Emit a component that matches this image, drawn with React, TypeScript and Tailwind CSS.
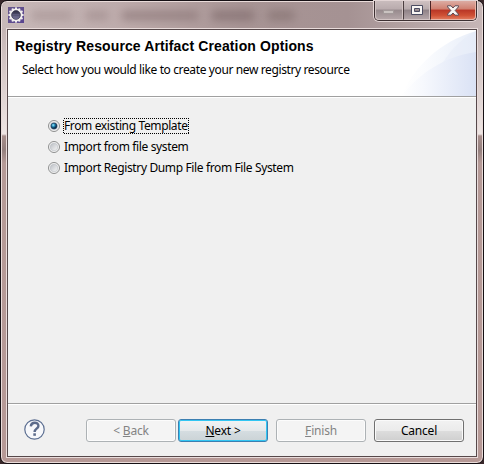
import type { ReactNode } from "react";

const uiFont = "font-['Noto_Sans','Open_Sans',sans-serif] text-[12px] leading-[16px]";

function GearIcon() {
  const teeth = Array.from({ length: 12 }, (_, i) => i * 30);
  return (
    <svg width="16" height="16" viewBox="0 0 16 16">
      <defs>
        <linearGradient id="gear-bg" x1="0" y1="0" x2="1" y2="1">
          <stop offset="0" stopColor="#67578c" />
          <stop offset="1" stopColor="#5a4590" />
        </linearGradient>
        <linearGradient id="gear-core" x1="0" y1="0" x2="0" y2="1">
          <stop offset="0" stopColor="#2b2940" />
          <stop offset="1" stopColor="#7b789e" />
        </linearGradient>
      </defs>
      <rect width="16" height="16" fill="url(#gear-bg)" />
      <g fill="#f1eeee">
        {teeth.map((a) => (
          <rect key={a} x="7" y="0.4" width="2" height="3" transform={`rotate(${a} 8 8)`} />
        ))}
        <circle cx="8" cy="8" r="6.5" />
      </g>
      <circle cx="8" cy="8" r="4.4" fill="url(#gear-core)" stroke="#34304a" strokeWidth="0.7" />
      <path d="M4.5 7.5h7M4.7 9.5h6.6" stroke="#6d698f" strokeWidth="0.5" />
    </svg>
  );
}

function Caption() {
  return (
    <div className="flex h-[20px] w-[103px] rounded-b-[5px] border border-t-0 border-[#3d3032] shadow-[0_0_0_1px_#e3d5d5]">
      <div className="flex w-[28px] items-center justify-center rounded-bl-[4px] border border-t-0 border-[#d2c4c4] bg-[linear-gradient(#c9bcbd_0%,#b9abad_45%,#978a8d_50%,#b3a5a7_100%)] pt-[3px]">
        <svg width="14" height="6" viewBox="0 0 14 6">
          <rect x="1.5" y="1.5" width="10" height="3" fill="#cac3c1" stroke="#a29999" />
        </svg>
      </div>
      <div className="flex w-[27px] items-center justify-center border border-t-0 border-l-[#4b3e40] border-r-[#d2c4c4] border-b-[#d2c4c4] bg-[linear-gradient(#cfc1c2_0%,#b8abad_45%,#8f8287_50%,#b3a5a8_100%)]">
        <svg width="12" height="10" viewBox="0 0 12 10">
          <path fillRule="evenodd" d="M.5.5h11v9H.5zM3.5 3.5v3h5v-3z" fill="#f8f5f3" stroke="#4b4c62" />
        </svg>
      </div>
      <div className="flex flex-1 items-center justify-center rounded-br-[4px] border border-t-0 border-l-[#4b2425] border-r-[#e8b5a8] border-b-[#e8b5a8] bg-[linear-gradient(#dcaca3_0%,#cf7f70_45%,#b93626_50%,#cf5135_80%,#e0775a_100%)]">
        <svg width="12" height="11" viewBox="0 0 12 11">
          <path d="M.5.8H4L6 3 8 .8h3.5v1L8.2 5.5l3.3 3.7v1H8L6 8l-2 2.2H.5v-1l3.3-3.7L.5 1.8z" fill="#f8f4f1" stroke="#5a4955" />
        </svg>
      </div>
    </div>
  );
}

function Radio({ checked, focused, children }: { checked?: boolean; focused?: boolean; children: ReactNode }) {
  return (
    <label className="flex h-[21px] items-center">
      <svg width="12" height="12" viewBox="0 0 12 12" className="-mt-px shrink-0">
        <defs>
          <linearGradient id="radio-face" x1="0" y1="0" x2="1" y2="1">
            <stop offset="0" stopColor="#b9bdc3" />
            <stop offset="1" stopColor="#f8f8f8" />
          </linearGradient>
          <radialGradient id="radio-dot" cx=".38" cy=".35">
            <stop offset="0" stopColor="#a9e6f8" />
            <stop offset=".45" stopColor="#2d9ac5" />
            <stop offset="1" stopColor="#0b304f" />
          </radialGradient>
        </defs>
        <circle cx="6" cy="6" r="5.5" fill="#f5f5f5" stroke="#8e8f8f" />
        <circle cx="6" cy="6" r="3.8" fill="url(#radio-face)" stroke="#b8bdc2" strokeWidth=".6" />
        {checked && <circle cx="6" cy="6" r="3" fill="url(#radio-dot)" stroke="#17395b" strokeWidth=".6" />}
      </svg>
      <span className="relative mb-px ml-[4px] tracking-[-0.37px] whitespace-nowrap text-black">
        {children}
        {focused && (
          <svg width="126" height="16" className="absolute -left-px top-0">
            <rect x=".5" y=".5" width="125" height="15" fill="none" stroke="#000" strokeDasharray="1 1" shapeRendering="crispEdges" />
          </svg>
        )}
      </span>
    </label>
  );
}

function Button({ className, children }: { className: string; children: ReactNode }) {
  return (
    <button className={`flex h-[23px] w-[90px] items-center justify-center rounded-[3px] border tracking-[-0.2px] whitespace-pre ${className}`}>
      {children}
    </button>
  );
}

const disabled = "border-[#adb2b5] bg-[#f4f4f4] text-[#838383] shadow-[inset_0_0_0_1px_#fcfcfc]";

export default function App() {
  return (
    <div className="h-[464px] w-[484px] overflow-hidden bg-[#38272a]">
      <div className={`flex h-[464px] w-[484px] flex-col rounded-[7px] border border-[#151014] bg-[linear-gradient(#b9a8a8_0px,#c4b4b4_25px,#d8cbca_75px,#eee5e3_133px,#a88f8c_135px,#94807e_149px,#b59a97_162px,#b69996_100%)] shadow-[inset_0_0_0_1px_#eadcda] ${uiFont}`}>
        <div className="relative mx-px mt-px flex h-[26px] shrink-0 justify-between rounded-t-[6px] bg-[linear-gradient(90deg,#c8b9b9_0%,#bdabab_25%,#a79494_50%,#a59293_72%,#c6b6b6_100%)]">
          <div className="absolute left-[30px] top-[9px] flex gap-[14px] opacity-70 blur-[4px]">
            <i className="h-[9px] w-[40px] bg-[#a69393]" />
            <i className="h-[9px] w-[22px] bg-[#a08c8d]" />
            <i className="h-[9px] w-[76px] bg-[#8c7778]" />
            <i className="h-[9px] w-[42px] bg-[#7f6a6c]" />
            <i className="h-[9px] w-[26px] bg-[#83706f]" />
          </div>
          <div className="relative ml-[6px] mt-[5px]"><GearIcon /></div>
          <div className="relative -mt-px mr-[5px]"><Caption /></div>
        </div>
        <div className="mx-[5px] mb-[5px] flex min-h-0 flex-1 flex-col border border-[#e9dcdb]">
          <div className="flex min-h-0 flex-1 flex-col border border-[#56484a] bg-[#f0f0f0]">
            <header className="relative h-[67px] shrink-0 border-b border-[#a0a0a0] bg-white">
              <svg width="80" height="66" viewBox="0 0 80 66" className="absolute right-0 top-0">
                <defs>
                  <linearGradient id="swoosh"><stop offset="0" stopColor="#fff" /><stop offset=".3" stopColor="#fbfcfe" /><stop offset="1" stopColor="#e8eef9" /></linearGradient>
                  <linearGradient id="swoosh2"><stop offset="0" stopColor="#fff" /><stop offset=".3" stopColor="#f6f8fd" /><stop offset="1" stopColor="#dae2f5" /></linearGradient>
                </defs>
                <path d="M5 66C19 36 43 12 80 1v65z" fill="url(#swoosh)" />
                <path d="M34 66C41 37 54 15 80 1v65z" fill="#e3e9f7" opacity=".35" />
                <path d="M5 66C25 42 48 27 80 22v44z" fill="url(#swoosh2)" />
              </svg>
              <h1 className="relative ml-[7px] pt-[8px] font-['Liberation_Sans',Arial,sans-serif] text-[14px] font-bold leading-[17px] tracking-[0.12px] whitespace-nowrap text-black">Registry Resource Artifact Creation Options</h1>
              <p className="relative ml-[14px] mt-[7px] tracking-[-0.38px] whitespace-nowrap text-black">Select how you would like to create your new registry resource</p>
            </header>
            <main className="flex-1 border-t border-white pl-[40px] pt-[18px]">
              <Radio checked focused>From existing Template</Radio>
              <Radio>Import from file system</Radio>
              <Radio>Import Registry Dump File from File System</Radio>
            </main>
            <footer className="flex h-[53px] shrink-0 border-t border-[#a0a0a0]">
              <div className="flex flex-1 items-start border-t border-white pl-[16px] pt-[14px]">
                <svg width="21" height="21" viewBox="0 0 21 21">
                  <circle cx="10.5" cy="10.5" r="9.7" fill="#f7f8fb" stroke="#5b6e91" strokeWidth="1.2" />
                  <path d="M6.8 7.4c.4-4.8 7.7-4.6 7.6-.5 0 2.8-3.8 2.8-3.8 6" fill="none" stroke="#5c6b8b" strokeWidth="2.4" />
                  <rect x="9.3" y="14.3" width="2.6" height="2.5" fill="#5c6b8b" />
                </svg>
                <Button className={`ml-[41px] ${disabled}`}>&lt; <u>B</u>ack</Button>
                <Button className="ml-[2px] border-[#3c7fb1] bg-[linear-gradient(#f1f3f4_0%,#e5e9eb_50%,#d5dde1_52%,#cbd3d6_100%)] text-black shadow-[inset_0_0_0_1px_#32c6f3]"><u>N</u>ext &gt;</Button>
                <Button className={`ml-[8px] ${disabled}`}><u>F</u>inish</Button>
                <Button className="ml-[8px] border-[#707070] bg-[linear-gradient(#f2f2f2_0%,#ebebeb_50%,#dddddd_52%,#cfcfcf_100%)] text-black shadow-[inset_0_0_0_1px_#fafafa]">Cancel</Button>
              </div>
            </footer>
          </div>
        </div>
      </div>
    </div>
  );
}
